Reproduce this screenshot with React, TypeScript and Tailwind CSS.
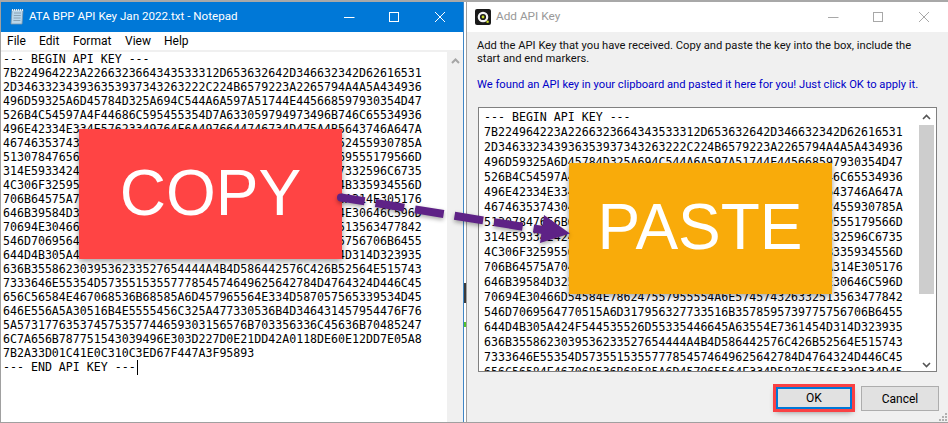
const keyLines = [
  '7B224964223A2266323664343533312D653632642D346632342D62616531',
  '2D346332343936353937343263222C224B6579223A2265794A4A5A434936',
  '496D59325A6D45784D325A694C544A6A597A51744E445668597930354D47',
  '526B4C54597A4F44686C595455354D7A633059794973496B746C65534936',
  '496E42334E334E57623349764F6A4976644746734D475A4B5643746A647A',
  '4674635374304D566B3135597A5A4B6D6B4A6E626C4E575552455930785A',
  '51307847656B6344526B4E6A5A584E6C63444D3159557A6C69555179566D',
  '314E593342424E5755324D6E4A6C5A57354F6B5A4A4E45517332596C6735',
  '4C306F3259556C5964334E6D4E7A566D59645A574A445A6B4B335934556D',
  '706B64575A704D6C4A5857546E4E6A516C6B4D574E4A4A314A314E305176',
  '646B39584D325A6B5A5852324D32565A4E6C4E584A4452344E30646C596D',
  '70694E30466D54584E786247557955554A6E574574326332513563477842',
  '546D7069564770515A6D317956327733516B3578595739775756706B6455',
  '644D4B305A424F544535526D55335446645A63554E7361454D314D323935',
  '636B3558623039536233527654444A4B4D586442576C426B52564E515743',
  '7333646E55354D5735515355777854574649625642784D4764324D446C45',
  '656C56584E467068536B68585A6D457965564E334D587057565339534D45',
  '646E556A5A30516B4E5555456C325A477330536B4D346431457954476F76',
  '5A573177635374575357744659303156576B703356336C45636B70485247',
  '6C7A656B787751543039496E303D227D0E21DD42A0118DE60E12DD7E05A8',
  '7B2A33D01C41E0C310C3ED67F447A3F95893',
]

function WindowControls({ color }: { color: string }) {
  return (
    <svg width="104" height="14" viewBox="0 0 104 14" fill="none" stroke={color} strokeWidth="1">
      <path d="M0 7.5H10.5" />
      <rect x="45.5" y="2.5" width="9" height="9" />
      <path d="M91 2L101 12M101 2L91 12" />
    </svg>
  )
}

function NotepadIcon() {
  return (
    <svg width="16" height="17" viewBox="0 0 16 17">
      <path d="M3 2H14L13 16H2Z" fill="#b9d6ea" stroke="#7d97aa" strokeWidth="0.8" />
      <path d="M5 5H12M4.8 7.5H11.8M4.6 10H11.6M4.4 12.5H11.4" stroke="#7f95a6" strokeWidth="0.8" />
      <path d="M3.5 1V3M5.5 1V3M7.5 1V3M9.5 1V3M11.5 1V3M13.5 1V3" stroke="#e8eef2" strokeWidth="1" />
    </svg>
  )
}

function AppIcon() {
  return (
    <svg width="16" height="16" viewBox="0 0 16 16">
      <rect width="16" height="16" rx="2" fill="#1a1a1a" />
      <circle cx="8" cy="8" r="4.2" fill="none" stroke="#f4f4f4" strokeWidth="2.2" />
      <circle cx="8" cy="8" r="1.4" fill="#c9dc2a" />
      <circle cx="12.6" cy="12.8" r="1.3" fill="#c9dc2a" />
    </svg>
  )
}

function Notepad() {
  return (
    <div className="flex w-[463px] shrink-0 flex-col border-l border-[#a0a0a0]">
      <div className="flex h-[30px] items-center justify-between bg-[#0078d7] pl-2 pr-[15px] text-white">
        <div className="flex items-center gap-1">
          <NotepadIcon />
          <span className="text-[11.6px]">ATA BPP API Key Jan 2022.txt - Notepad</span>
        </div>
        <WindowControls color="#ffffff" />
      </div>
      <div className="flex h-[18px] items-center pl-[6px] text-[12px] text-black">
        <span className="w-[32px]">File</span>
        <span className="w-[34px]">Edit</span>
        <span className="w-[52px]">Format</span>
        <span className="w-[39px]">View</span>
        <span>Help</span>
      </div>
      <div className="h-[2px] bg-[#f0f0f0]" />
      <div className="flex min-h-0 flex-1">
        <div className="flex-1 overflow-hidden bg-white pl-[2px] font-['DejaVu_Sans_Mono',monospace] text-[11.6px] leading-[14px] text-black">
          <div className="whitespace-pre">--- BEGIN API KEY ---</div>
          {keyLines.map((line, i) => (
            <div key={i} className="whitespace-pre">{line}</div>
          ))}
          <div className="flex whitespace-pre">
            --- END API KEY ---
            <span className="ml-[1px] h-[15px] w-px bg-black" />
          </div>
        </div>
        <div className="flex w-[16px] shrink-0 justify-center bg-[#f0f0f0] pt-[6px]">
          <svg width="9" height="6" viewBox="0 0 9 6" fill="none" stroke="#a6a6a6" strokeWidth="2">
            <path d="M1 5L4.5 1.5L8 5" />
          </svg>
        </div>
      </div>
    </div>
  )
}

function AddKeyDialog() {
  return (
    <div className="flex min-w-0 flex-1 flex-col border-l border-[#a0a0a0]">
      <div className="flex h-[30px] shrink-0 items-center justify-between bg-white pl-2 pr-[16px]">
        <div className="flex items-center gap-[5px]">
          <AppIcon />
          <span className="text-[11.8px] text-[#999999]">Add API Key</span>
        </div>
        <WindowControls color="#a8a8a8" />
      </div>
      <div className="relative flex min-h-0 flex-1 flex-col bg-[#f0f0f0] pl-[10px] pr-[10px]">
        <div className="pt-[7px] text-[11.2px] leading-[13px] whitespace-nowrap text-[#111111]">
          <div>Add the API Key that you have received. Copy and paste the key into the box, include the</div>
          <div>start and end markers.</div>
        </div>
        <div className="mt-[13px] text-[11.2px] leading-[13px] whitespace-nowrap text-[#0000c8]">
          We found an API key in your clipboard and pasted it here for you! Just click OK to apply it.
        </div>
        <div className="mt-[16px] ml-px mr-[1px] flex h-[265px] shrink-0 border border-[#808080] bg-white">
          <div className="flex-1 overflow-hidden pl-[5px] pt-[2px] font-['DejaVu_Sans_Mono',monospace] text-[11.6px] leading-[15px] text-black">
            <div className="whitespace-pre">--- BEGIN API KEY ---</div>
            {/* only 17 rows fit before the box clips */}
            {keyLines.slice(0, 17).map((line, i) => (
              <div key={i} className="whitespace-pre">{line}</div>
            ))}
          </div>
          <div className="flex w-[15px] shrink-0 flex-col items-center">
            <div className="flex h-[17px] items-center">
              <svg width="9" height="6" viewBox="0 0 9 6" fill="none" stroke="#555555" strokeWidth="1.6">
                <path d="M1 5L4.5 1.5L8 5" />
              </svg>
            </div>
            <div className="h-[169px] w-full bg-[#cdcdcd]" />
            <div className="flex flex-1 items-end pb-[3px]">
              <svg width="9" height="6" viewBox="0 0 9 6" fill="none" stroke="#555555" strokeWidth="1.6">
                <path d="M1 1L4.5 4.5L8 1" />
              </svg>
            </div>
          </div>
          <div className="w-[2px] shrink-0" />
        </div>
        <div className="mt-[15px] flex items-start justify-end gap-[9px]">
          <button className="h-[22px] w-[76px] border-2 border-[#0078d7] bg-[#e1e1e1] text-[12px] text-black outline-[3px] outline-offset-0 outline-[#f94144] shadow-[0_3px_6px_rgba(0,0,0,0.45)]">
            OK
          </button>
          <button className="-mr-[1px] -mt-px h-[25px] w-[78px] border border-[#adadad] bg-[#e1e1e1] text-[12px] text-black">
            Cancel
          </button>
        </div>
        <svg className="absolute bottom-[1px] right-[1px]" width="8" height="8" viewBox="0 0 8 8" fill="#b0b0b0">
          <rect x="6" y="0" width="2" height="2" />
          <rect x="3" y="3" width="2" height="2" />
          <rect x="6" y="3" width="2" height="2" />
          <rect x="0" y="6" width="2" height="2" />
          <rect x="3" y="6" width="2" height="2" />
          <rect x="6" y="6" width="2" height="2" />
        </svg>
      </div>
    </div>
  )
}

export default function App() {
  return (
    <div className="relative flex h-[423px] w-[948px] flex-col overflow-hidden border-b border-[#a0a0a0] bg-white font-['Roboto',sans-serif]">
      <div className="h-[2px] shrink-0 bg-[#a8a8a8]" />
      <div className="flex min-h-0 flex-1">
        <Notepad />
        <div className="relative w-[3px] shrink-0 border-l border-[#3f86c6] bg-white">
          <div className="absolute left-0 top-[281px] h-[20px] w-[2px] bg-[#3a3a3a]" />
          <div className="absolute left-0 top-[320px] h-[5px] w-[2px] bg-[#55c22b]" />
        </div>
        <AddKeyDialog />
      </div>

      {/* callouts over the two windows */}
      <div className="absolute left-[79px] top-[129px] flex h-[130px] w-[263px] items-center justify-center bg-[#ff4444] pb-[3px] font-['Liberation_Sans',sans-serif] text-[64px] text-white shadow-[0_2px_6px_rgba(0,0,0,0.4)]">
        COPY
      </div>
      <div className="absolute left-[569px] top-[163px] flex h-[131px] w-[263px] items-center justify-center bg-[#f9ab0a] pb-[3px] pr-[1px] font-['Liberation_Sans',sans-serif] text-[64px] text-white shadow-[0_2px_6px_rgba(0,0,0,0.4)]">
        PASTE
      </div>

      <svg className="absolute left-0 top-0" width="948" height="423" viewBox="0 0 948 423" fill="none">
        <g className="drop-shadow-[0_2px_2px_rgba(0,0,0,0.35)]">
          <circle cx="341" cy="197.5" r="4" fill="#5e2286" />
          <path d="M341 197.5L543 230" stroke="#5e2286" strokeWidth="8" strokeDasharray="29 11" strokeDashoffset="5" />
          <path d="M544 215L570 233.5L540 243Z" fill="#5e2286" />
        </g>
      </svg>
    </div>
  )
}
